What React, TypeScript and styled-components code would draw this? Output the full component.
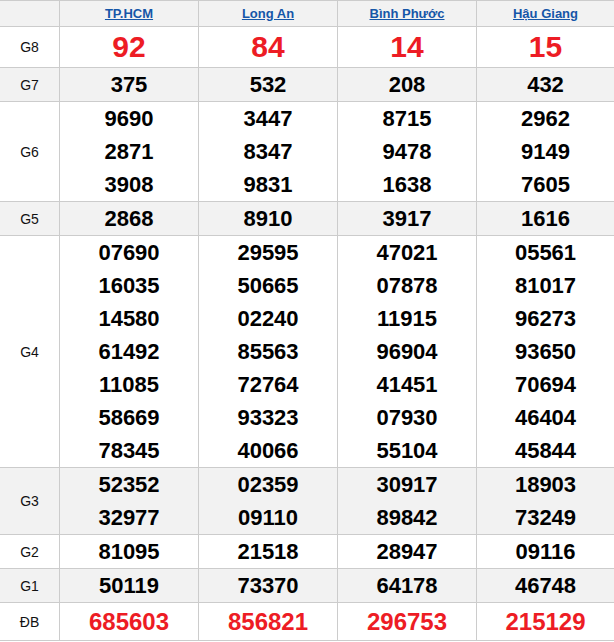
import React from "react";
import styled, { createGlobalStyle } from "styled-components";

const Global = createGlobalStyle`
  html, body { margin: 0; padding: 0; background: #fff; }
  body { font-family: "Liberation Sans", Arial, sans-serif; overflow: hidden; }
`;

const Board = styled.div`
  width: 614px;
  border-top: 1px solid #cccccc;
`;

const Row = styled.div<{ $shade: boolean }>`
  display: grid;
  grid-template-columns: 60px 139px 139px 139px 1fr;
  background: ${(p) => (p.$shade ? "#f2f2f2" : "#ffffff")};
  border-bottom: 1px solid #cccccc;
`;

const Cell = styled.div<{ $last?: boolean }>`
  box-sizing: border-box;
  display: flex;
  flex-direction: column;
  align-items: center;
  justify-content: center;
  border-right: ${(p) => (p.$last ? "none" : "1px solid #cccccc")};
`;

const HeadLink = styled.a`
  font-size: 13px;
  font-weight: bold;
  color: #1556a8;
  text-decoration: underline;
  line-height: 25px;
`;

const Label = styled.span`
  font-size: 14px;
  color: #111;
`;

const Num = styled.div<{ $big?: boolean; $red?: boolean; $lh: number }>`
  font-weight: bold;
  font-size: ${(p) => (p.$big ? "30px" : p.$red ? "24px" : "22px")};
  color: ${(p) => (p.$red ? "#ed1c24" : "#000")};
  line-height: ${(p) => p.$lh}px;
  text-align: center;
`;

const provinces = ["TP.HCM", "Long An", "Bình Phước", "Hậu Giang"];

type Prize = { label: string; values: string[][]; lh: number; big?: boolean; red?: boolean };

const prizes: Prize[] = [
  { label: "G8", values: [["92"], ["84"], ["14"], ["15"]], lh: 40, big: true, red: true },
  { label: "G7", values: [["375"], ["532"], ["208"], ["432"]], lh: 33 },
  {
    label: "G6",
    values: [
      ["9690", "2871", "3908"],
      ["3447", "8347", "9831"],
      ["8715", "9478", "1638"],
      ["2962", "9149", "7605"],
    ],
    lh: 33,
  },
  { label: "G5", values: [["2868"], ["8910"], ["3917"], ["1616"]], lh: 33 },
  {
    label: "G4",
    values: [
      ["07690", "16035", "14580", "61492", "11085", "58669", "78345"],
      ["29595", "50665", "02240", "85563", "72764", "93323", "40066"],
      ["47021", "07878", "11915", "96904", "41451", "07930", "55104"],
      ["05561", "81017", "96273", "93650", "70694", "46404", "45844"],
    ],
    lh: 33,
  },
  {
    label: "G3",
    values: [
      ["52352", "32977"],
      ["02359", "09110"],
      ["30917", "89842"],
      ["18903", "73249"],
    ],
    lh: 33,
  },
  { label: "G2", values: [["81095"], ["21518"], ["28947"], ["09116"]], lh: 33 },
  { label: "G1", values: [["50119"], ["73370"], ["64178"], ["46748"]], lh: 33 },
  { label: "ĐB", values: [["685603"], ["856821"], ["296753"], ["215129"]], lh: 37, red: true },
];

export default function App() {
  return (
    <>
      <Global />
      <Board>
        <Row $shade>
          <Cell />
          {provinces.map((p, i) => (
            <Cell key={p} $last={i === 3}>
              <HeadLink href="#">{p}</HeadLink>
            </Cell>
          ))}
        </Row>
        {prizes.map((pr, ri) => (
          <Row key={pr.label} $shade={ri % 2 === 1}>
            <Cell>
              <Label>{pr.label}</Label>
            </Cell>
            {pr.values.map((col, ci) => (
              <Cell key={ci} $last={ci === 3}>
                {col.map((v, vi) => (
                  <Num key={vi} $lh={pr.lh} $big={pr.big} $red={pr.red}>
                    {v}
                  </Num>
                ))}
              </Cell>
            ))}
          </Row>
        ))}
      </Board>
    </>
  );
}
